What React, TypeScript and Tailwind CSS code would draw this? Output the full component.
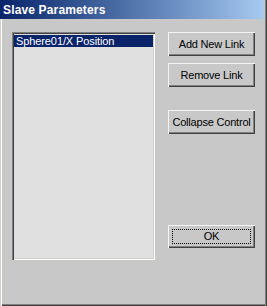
import React from "react";

const font = { fontFamily: '"Liberation Sans", Arial, sans-serif' };

function Btn({ label, focus = false, h = "h-[24px]", mt = "" }: { label: string; focus?: boolean; h?: string; mt?: string }) {
  return (
    <div
      className={`relative w-[87px] ${h} ${mt} bg-[#c8c8c8] flex items-center justify-center text-[11px] tracking-[-0.2px] text-black shadow-[inset_1px_1px_#f4f4f4,inset_-1px_-1px_#404040,inset_-2px_-2px_#808080]`}
    >
      {focus && (
        <div className="absolute left-[4px] top-[4px] right-[4px] bottom-[4px] border border-dotted border-black" />
      )}
      <span className="relative leading-none">{label}</span>
    </div>
  );
}

export default function App() {
  return (
    <div
      className="w-[267px] h-[306px] bg-[#c8c8c8] flex flex-col shadow-[inset_1px_0_#d4d0c8,inset_2px_0_#ffffff,inset_-1px_0_#404040,inset_-2px_0_#808080,inset_0_-1px_#404040,inset_0_-2px_#808080]"
      style={font}
    >
      <div className="w-[264px] h-[19px] shrink-0 bg-gradient-to-r from-[#0a246a] to-[#a6caf0] flex items-center pl-[3px]">
        <span className="text-white font-bold text-[12px] tracking-[0.15px] leading-none">Slave Parameters</span>
      </div>
      <div className="flex pl-[12px] pt-[13px]">
        <div className="w-[143px] h-[228px] bg-[#e0e0e0] shadow-[inset_1px_1px_#808080,inset_2px_2px_#404040,inset_-1px_-1px_#ffffff,inset_-2px_-2px_#d4d0c8] pt-[3px] pl-[2px] pr-[2px]">
          <div className="h-[12px] bg-[#0a246a] text-white text-[11px] tracking-[-0.1px] leading-[12px] pl-[2px]">
            Sphere01/X Position
          </div>
        </div>
        <div className="ml-[13px] flex flex-col">
          <Btn label="Add New Link" />
          <Btn label="Remove Link" mt="mt-[7px]" />
          <Btn label="Collapse Control" mt="mt-[23px]" />
          <Btn label="OK" focus h="h-[23px]" mt="mt-[91px]" />
        </div>
      </div>
    </div>
  );
}
